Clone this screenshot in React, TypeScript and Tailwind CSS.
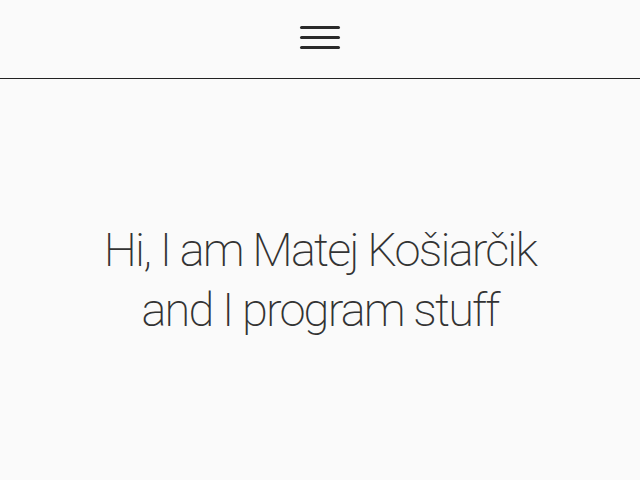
export default function App() {
  return (
    <div className="h-[480px] flex flex-col bg-[#fafafa] text-[#333] font-['Roboto',sans-serif]">
      <header className="h-[79px] shrink-0 flex items-center justify-center border-b border-[#222]">
        <button type="button" className="flex flex-col gap-[7px] w-[40px] mt-[-3px]">
          <span className="h-[3px] bg-[#2a2a2a] rounded-full" />
          <span className="h-[3px] bg-[#2a2a2a] rounded-full" />
          <span className="h-[3px] bg-[#2a2a2a] rounded-full" />
        </button>
      </header>
      <main className="flex-1 flex items-center justify-center">
        <h1 className="text-center font-extralight text-[47px] leading-[60px] tracking-[-1.85px]">
          Hi, I am Matej Košiarčik
          <br />
          and I program stuff
        </h1>
      </main>
    </div>
  );
}
